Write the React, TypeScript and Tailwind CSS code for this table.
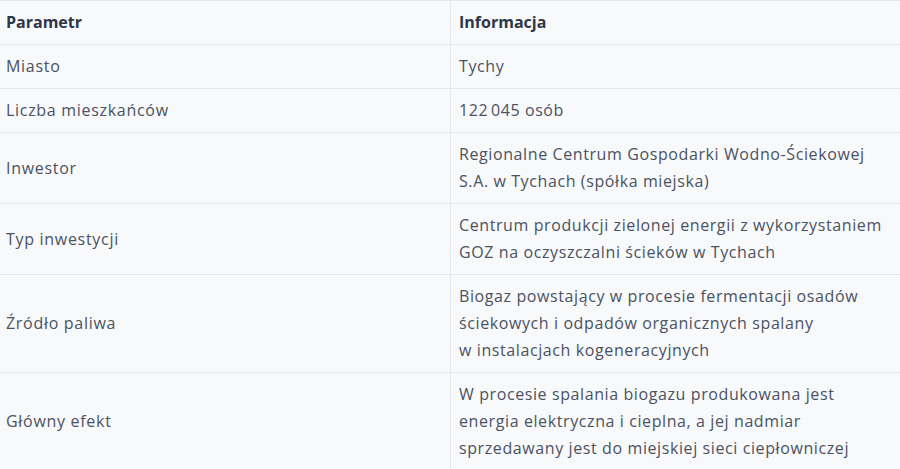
import React from "react";

const rows: [string, string[]][] = [
  ["Miasto", ["Tychy"]],
  ["Liczba mieszkańców", ["122\u202F045 osób"]],
  ["Inwestor", ["Regionalne Centrum Gospodarki Wodno-Ściekowej", "S.A. w Tychach (spółka miejska)"]],
  ["Typ inwestycji", ["Centrum produkcji zielonej energii z wykorzystaniem", "GOZ na oczyszczalni ścieków w Tychach"]],
  ["Źródło paliwa", ["Biogaz powstający w procesie fermentacji osadów", "ściekowych i odpadów organicznych spalany", "w instalacjach kogeneracyjnych"]],
  ["Główny efekt", ["W procesie spalania biogazu produkowana jest", "energia elektryczna i cieplna, a jej nadmiar", "sprzedawany jest do miejskiej sieci ciepłowniczej"]],
];

export default function App() {
  return (
    <div
      className="w-[900px] h-[469px] overflow-hidden bg-[#f8f9fb] border-t border-[#e6e8ec] text-[16px] leading-[27px]"
      style={{ fontFamily: '"Open Sans", "Noto Sans", sans-serif' }}
    >
      <div className="flex border-b border-[#e6e8ec]">
        <div className="w-[451px] shrink-0 border-r border-[#e6e8ec] pl-[6px] py-[8px] font-bold text-[#2d3748]">
          Parametr
        </div>
        <div className="flex-1 pl-[8px] py-[8px] font-bold text-[#2d3748]">Informacja</div>
      </div>
      {rows.map(([k, v]) => (
        <div key={k} className="flex border-b border-[#e6e8ec]">
          <div className="w-[451px] shrink-0 border-r border-[#e6e8ec] pl-[6px] py-[8px] flex items-center text-[#4a5263] tracking-[0.7px]">
            {k}
          </div>
          <div className="flex-1 pl-[8px] py-[8px] text-[#4a5263] tracking-[0.6px]">
            {v.map((l) => (
              <div key={l}>{l}</div>
            ))}
          </div>
        </div>
      ))}
    </div>
  );
}
